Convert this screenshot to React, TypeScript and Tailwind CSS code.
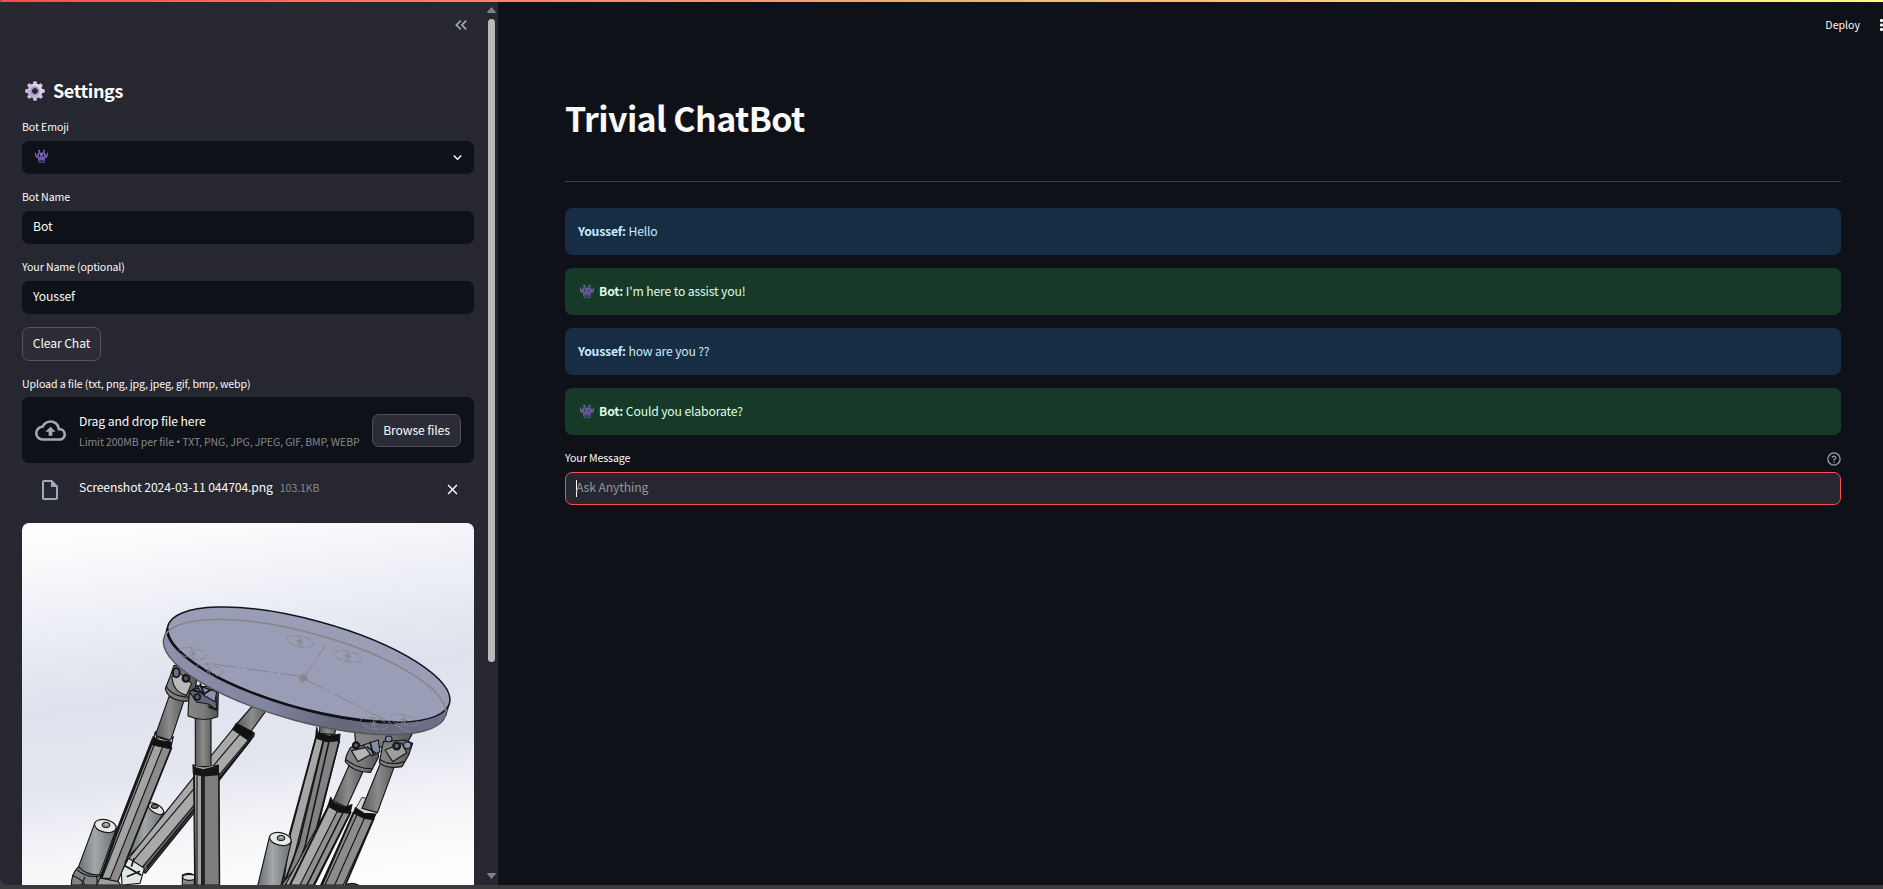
import React from "react";
import {
  MdKeyboardDoubleArrowLeft,
  MdOutlineCloudUpload,
  MdOutlineInsertDriveFile,
  MdClose,
  MdExpandMore,
} from "react-icons/md";

const monsterRows = [
  "...##...##...",
  "....#...#....",
  "#..#######..#",
  "#.##.###.##.#",
  "####.###.####",
  ".###########.",
  "...#######...",
  "...#######...",
  "...#.....#...",
  "....##.##....",
];

function Monster({ className }: { className: string }) {
  return (
    <svg viewBox="0 0 13 10" className={className} preserveAspectRatio="none">
      <defs>
        <linearGradient id="monster" x1="0" y1="0" x2="0" y2="10" gradientUnits="userSpaceOnUse">
          <stop offset="0" stopColor="#7573b8" />
          <stop offset="1" stopColor="#7a4fb0" />
        </linearGradient>
      </defs>
      {monsterRows.flatMap((row, y) =>
        row.split("").map((c, x) =>
          c === "#" ? <rect key={`${x}-${y}`} x={x} y={y} width="1.03" height="1.03" fill="url(#monster)" /> : null
        )
      )}
    </svg>
  );
}

function Gear() {
  return (
    <svg viewBox="-10 -10 20 20" className="size-5 shrink-0">
      <defs>
        <linearGradient id="gear" x1="1" y1="0" x2="0" y2="1">
          <stop offset="0" stopColor="#e6dcef" />
          <stop offset="1" stopColor="#b5a3cc" />
        </linearGradient>
      </defs>
      {[0, 45, 90, 135, 180, 225, 270, 315].map((a) => (
        <rect key={a} x="-1.9" y="-9.8" width="3.8" height="5" rx="1.3" fill="#cfc2de" transform={`rotate(${a})`} />
      ))}
      <circle r="5.3" fill="none" stroke="url(#gear)" strokeWidth="4.6" />
      <circle r="3.8" fill="none" stroke="#a795bd" strokeWidth="1.4" />
    </svg>
  );
}

function Field({ label, children }: { label: string; children: React.ReactNode }) {
  return (
    <div className="mb-[13px]">
      <div className="mb-[4px] h-[20px] text-[10.6px] leading-[20px] tracking-[-0.01em]">{label}</div>
      <div className="flex h-[33px] items-center rounded-[7px] bg-[#0e1117] px-[11px] text-[12.2px]">{children}</div>
    </div>
  );
}

const OUT = "#17181a";

function Mark({ x, y }: { x: number; y: number }) {
  return (
    <g transform={`translate(${x} ${y}) rotate(12)`} fill="none" stroke="#85868a" strokeWidth="2.5">
      <ellipse rx="41" ry="16" strokeDasharray="22 8" />
      <path d="M-12 0H12M-6-13L6 13M6-13L-6 13" />
    </g>
  );
}

function Motor({ x, y, dx, dy }: { x: number; y: number; dx: number; dy: number }) {
  return (
    <g stroke={OUT} strokeWidth="3.5">
      <path d={`M${x - 33} ${y - 5}l${dx} ${dy}q28 26 66 16L${x + 33} ${y + 8}z`} fill="url(#motor)" />
      <ellipse cx={x} cy={y} rx="33" ry="19" transform={`rotate(12 ${x} ${y})`} fill="#e6ebea" />
      <ellipse cx={x + 2} cy={y - 3} rx="12" ry="8" fill="#8d8c88" strokeWidth="3" />
      <ellipse cx={x + 3} cy={y - 5} rx="5" ry="3" fill="#c9b9a9" stroke="none" />
    </g>
  );
}

function Platform() {
  return (
    <svg
      viewBox="66 39 1356 1086"
      preserveAspectRatio="none"
      className="block h-[362px] w-[452px] shrink-0 rounded-t-[7px]"
    >
      <defs>
        <linearGradient id="sky" x1="0.38" y1="0" x2="0.55" y2="1">
          <stop offset="0" stopColor="#fcfdfd" />
          <stop offset="0.2" stopColor="#eef0f6" />
          <stop offset="0.45" stopColor="#dfe2ed" />
          <stop offset="0.66" stopColor="#e4e6ef" />
          <stop offset="0.86" stopColor="#f6f6f9" />
          <stop offset="1" stopColor="#fdfdfd" />
        </linearGradient>
        <linearGradient id="rim">
          <stop offset="0" stopColor="#8d91ad" />
          <stop offset="0.4" stopColor="#81859f" />
          <stop offset="0.65" stopColor="#656879" />
          <stop offset="1" stopColor="#6e7187" />
        </linearGradient>
        <linearGradient id="rod">
          <stop offset="0" stopColor="#5c5c5c" />
          <stop offset="0.5" stopColor="#8b8b8b" />
          <stop offset="1" stopColor="#5f5f5f" />
        </linearGradient>
        <linearGradient id="cup">
          <stop offset="0" stopColor="#858585" />
          <stop offset="0.5" stopColor="#7b7b7b" />
          <stop offset="1" stopColor="#555" />
        </linearGradient>
        <linearGradient id="motor">
          <stop offset="0.1" stopColor="#747a7b" />
          <stop offset="0.45" stopColor="#a2a8a9" />
          <stop offset="1" stopColor="#6a6f70" />
        </linearGradient>
      </defs>
      <rect x="66" y="39" width="1356" height="1086" fill="url(#sky)" />

      {/* rear diagonal leg with its motor */}
      <g stroke={OUT} strokeWidth="3.5" strokeLinejoin="round">
        <path d="M447 880L492 908L440 985L385 1040L400 960z" fill="url(#motor)" />
        <ellipse cx="468" cy="896" rx="26" ry="13" transform="rotate(32 468 896)" fill="#dfe3e3" />
        <ellipse cx="464" cy="889" rx="10" ry="6" fill="#77736f" />
        <path d="M760 585L800 600L750 668L710 642z" fill="url(#rod)" />
        <path d="M700 655L762 678L657 812L583 908L436 1090L384 1048L580 803z" fill="#a9a9a9" />
        <path d="M745 690L764 672L657 808L583 906L432 1088L424 1075z" fill="#666" />
        <path d="M722 670L400 1052" fill="none" />
        <path d="M752 690L440 1072" fill="none" strokeWidth="5" />
        <path d="M709 640L762 668L744 690L698 658z" fill="#111" />
        <path d="M386 1045L433 1075L420 1120L366 1125L364 1086z" fill="#dfe7e6" />
        <path d="M372 1066L424 1096M402 1045L394 1070M380 1100L420 1084" fill="none" strokeWidth="5" />
      </g>

      {/* front left leg */}
      <Motor x={316} y={948} dx={-51} dy={137} />
      <g stroke={OUT} strokeWidth="3.5" strokeLinejoin="round">
        <path d="M238 1072Q262 1098 302 1094L304 1125H214Q214 1094 232 1074z" fill="#7f8585" />
        <path d="M216 1096Q250 1110 254 1125M232 1080Q260 1105 300 1098M255 1100L245 1125M290 1100L292 1125" fill="none" />
        <path d="M507 560L552 572L512 692L466 676z" fill="url(#rod)" />
        <path d="M457 700L514 714L380 1050L352 1118L304 1104L352 968z" fill="#8c8c8c" />
        <path d="M463 704L488 710L330 1106L306 1104z" fill="#a3a3a3" />
        <path d="M459 685L350 965L302 1102" fill="none" strokeWidth="7" />
        <path d="M515 712L375 1060" fill="none" strokeWidth="5" />
        <path d="M466 665L470 682L508 692L520 680L512 715L457 703z" fill="#dedede" />
        <path d="M459 680L480 692L514 696L512 716L457 704z" fill="#111" />
        <path d="M300 1104L355 1115L362 1125H290z" fill="#9aa0a0" />
      </g>

      {/* front vertical leg */}
      <g stroke={OUT} strokeWidth="3.5" strokeLinejoin="round">
        <path d="M547 1095Q568 1085 583 1096V1125H547z" fill="#838888" />
        <ellipse cx="568" cy="1102" rx="20" ry="9" fill="#dce0df" />
        <rect x="586" y="620" width="47" height="156" fill="url(#rod)" />
        <path d="M581 790H657L659 1125H584z" fill="#7d7d7d" />
        <path d="M583 792L606 796V1125H586z" fill="#a4a4a4" />
        <path d="M606 795V1125M612 796V1125" fill="none" strokeWidth="5" />
        <path d="M591 795V1125M656 790L658 1125" fill="none" />
        <path d="M579 764L590 770H632L655 765V794L610 798L580 790z" fill="#151515" />
        <path d="M590 768Q612 776 634 768L650 767L610 778L582 770z" fill="#b8b8b8" strokeWidth="1" />
      </g>

      {/* centre leg */}
      <g stroke={OUT} strokeWidth="3.5" strokeLinejoin="round">
        <path d="M960 648H1008L1004 674L958 670z" fill="url(#rod)" />
        <path d="M948 680L1018 692L955 945L890 1125H846L872 970z" fill="#828282" />
        <path d="M948 684L970 690L880 1050L850 1125L872 970z" fill="#a6a6a6" />
        <path d="M987 694L915 1010L872 1125M971 692L897 1000L850 1125" fill="none" strokeWidth="5" />
        <path d="M1018 692L950 955M948 682L868 975" fill="none" strokeWidth="5" />
        <path d="M950 652L954 668L988 678L1020 672L1018 692L980 695L947 684z" fill="#121212" />
      </g>
      <Motor x={841} y={987} dx={-36} dy={150} />

      {/* pair of right legs */}
      <g stroke={OUT} strokeWidth="3.5" strokeLinejoin="round">
        <path d="M1050 760L1090 782L1040 892L1000 872z" fill="url(#rod)" />
        <path d="M986 884L1053 907L944 1125H844L905 1050z" fill="#909090" />
        <path d="M986 888L1014 900L900 1125H856z" fill="#a8a8a8" />
        <path d="M1030 906L921 1125M1052 906L941 1125" fill="none" strokeWidth="5" />
        <path d="M987 886L870 1125" fill="none" strokeWidth="6" />
        <path d="M992 862L1000 877L1034 892L1056 884L1050 910L1015 906L984 888z" fill="#121212" />
        <path d="M1086 862L1062 905L1120 928L1138 892L1110 868z" fill="#d5d5d8" strokeWidth="2.5" />
        <path d="M1142 758L1182 772L1132 908L1086 895z" fill="url(#rod)" />
        <path d="M1062 905L1120 927L1030 1125H962z" fill="#8c8c8c" />
        <path d="M1096 918L1004 1125M1072 912L975 1125" fill="none" />
        <path d="M1062 905L966 1125M1121 926L1036 1125" fill="none" strokeWidth="6" />
        <path d="M1066 893L1092 910L1126 912L1120 930L1090 924L1061 909z" fill="#121212" />
        <path d="M1036 1125Q1055 1115 1075 1125z" fill="#7f8585" />
      </g>

      {/* universal joints */}
      <g stroke={OUT} strokeWidth="3.5" strokeLinejoin="round">
        <path d="M522 466L512 495L496 536Q504 572 560 574L582 556L590 512L560 470z" fill="url(#cup)" />
        <path d="M516 500Q518 545 560 556L575 520L540 490z" fill="#b9b9b9" />
        <path d="M498 528Q515 560 572 562" fill="none" />
        <circle cx="558" cy="505" r="10" fill="#4c536c" strokeWidth="7" />
        <ellipse cx="529" cy="488" rx="10" ry="14" fill="#6f7588" strokeWidth="6" />
        <path d="M566 572Q566 540 590 530L640 530L655 545L653 620Q610 638 564 618z" fill="url(#cup)" />
        <path d="M568 545Q600 520 648 560L650 600L625 582L590 576z" fill="#62677a" />
        <path d="M590 526L650 545L645 575L610 555z" fill="#8b92ae" />
        <circle cx="592" cy="561" r="9" fill="#525a78" strokeWidth="5" />
        <path d="M600 520L612 552L640 534M576 540L612 550M625 590L652 600" fill="none" strokeWidth="6" />
        <path d="M1064 665H1240L1220 702L1180 735L1140 710L1068 715z" fill="url(#cup)" />
        <path d="M1052 712Q1035 740 1036 755Q1060 788 1112 787L1136 740L1130 700z" fill="url(#cup)" />
        <path d="M1054 722L1074 755L1120 728L1100 712z" fill="#b4b4b4" />
        <path d="M1036 748Q1075 778 1115 776" fill="none" />
        <path d="M1150 695L1138 758Q1160 778 1206 770L1226 735L1238 700L1215 690z" fill="url(#cup)" />
        <path d="M1155 720L1178 755L1220 728L1205 700z" fill="#9e9e9e" />
        <path d="M1138 748Q1170 770 1212 755" fill="none" />
        <path d="M1090 705L1135 690L1140 725L1115 738z" fill="#858ca6" />
        <path d="M1100 710L1128 730M1110 695L1120 735" fill="none" strokeWidth="5" />
        <circle cx="1190" cy="708" r="10" fill="#59617f" strokeWidth="7" />
        <circle cx="1068" cy="706" r="9" fill="#59617f" strokeWidth="7" />
        <ellipse cx="1166" cy="687" rx="10" ry="9" fill="#7f87a5" />
        <ellipse cx="1222" cy="706" rx="11" ry="10" fill="#8e96b8" />
      </g>

      {/* plate */}
      <g transform="translate(914 501) rotate(15.35)">
        <ellipse rx="438" ry="133" fill="url(#rim)" stroke="#55565c" strokeWidth="4" />
      </g>
      <path d="M1348 582L1336 619L492 383L504 346z" fill="url(#rim)" />
      <path d="M1348 582L1337 619M492 383L504 346" stroke="#3c3d44" strokeWidth="3" />
      <g transform="translate(926 464) rotate(15.35)" fill="#999db5">
        <ellipse rx="438" ry="133" stroke="#14151a" strokeWidth="4.5" />
        <path d="M-437 8A438 133 0 0 0 300 97" fill="none" stroke="#111217" strokeWidth="8" />
      </g>
      <g transform="translate(914 501) rotate(15.35)">
        <path d="M-436 -12A438 133 0 0 1 436 -12" fill="none" stroke="#85868a" strokeWidth="4.5" />
      </g>
      <g fill="none" stroke="#85868a" strokeWidth="3">
        <path d="M910 503L978 406" strokeDasharray="50 8 8 8" />
        <path d="M910 500L610 458" strokeDasharray="70 10 12 10" />
        <path d="M910 505L1230 668" strokeDasharray="70 10 12 10" />
        <path d="M895 504H925M910 489V519M900 494L920 514M920 494L900 514" strokeWidth="4" />
      </g>
      <Mark x={900} y={394} />
      <Mark x={1043} y={439} />
      <Mark x={578} y={430} />
      <Mark x={626} y={480} />
      <Mark x={1122} y={640} />
      <Mark x={1212} y={630} />
    </svg>
  );
}

function Sidebar() {
  return (
    <aside className="flex h-full w-[498px] shrink-0 overflow-hidden rounded-bl-[8px] bg-[#262730]">
      <div className="flex w-[474px] flex-col pl-[22px]">
        <div className="flex h-[46px] shrink-0 justify-end pt-[13px] pr-[3px]">
          <MdKeyboardDoubleArrowLeft className="size-[20px] text-[#a3a8b4]" />
        </div>
        <div className="mt-[30px] mb-[13px] flex h-[26px] shrink-0 items-center gap-[8px] pl-[3px]">
          <Gear />
          <h2 className="pb-[2px] text-[18px] leading-[26px] font-bold tracking-[-0.02em] text-white">Settings</h2>
        </div>
        <Field label="Bot Emoji">
          <span className="flex w-full items-center justify-between">
            <Monster className="mb-[2px] ml-[2px] h-[13px] w-[13px]" />
            <MdExpandMore className="mr-[-3px] mb-px size-[17px]" />
          </span>
        </Field>
        <Field label="Bot Name">
          <span className="pb-[3px] tracking-[-0.01em]">Bot</span>
        </Field>
        <Field label="Your Name (optional)">
          <span className="pb-[3px] tracking-[-0.01em]">Youssef</span>
        </Field>
        <button className="h-[34px] w-[79px] shrink-0 rounded-[7px] border border-[#53545c] bg-[#2b2c36] pb-[2px] text-[12.2px] tracking-[-0.01em]">
          Clear Chat
        </button>
        <div className="mt-[13px] mb-[3px] h-[20px] text-[10.6px] leading-[20px] tracking-[-0.01em]">
          Upload a file (txt, png, jpg, jpeg, gif, bmp, webp)
        </div>
        <div className="flex h-[66px] shrink-0 items-center rounded-[7px] bg-[#0e1117] pr-[13px] pl-[13px]">
          <MdOutlineCloudUpload className="mr-[13px] size-[31px] shrink-0 text-[#a3a8b8]" />
          <div className="flex-1 pt-[3px] whitespace-nowrap">
            <div className="text-[12.2px] leading-[20px] tracking-[-0.01em]">Drag and drop file here</div>
            <div className="text-[10.6px] leading-[21px] tracking-[-0.012em] text-[#86888c]">
              Limit 200MB per file <span className="font-['Noto_Sans']">•</span> TXT, PNG, JPG, JPEG, GIF, BMP, WEBP
            </div>
          </div>
          <button className="h-[33px] w-[89px] shrink-0 rounded-[7px] border border-[#50515a] bg-[#2b2c36] text-[12.2px] tracking-[-0.01em]">
            Browse files
          </button>
        </div>
        <div className="flex h-[60px] shrink-0 items-center pr-[13px] pb-[6px] pl-[16px]">
          <MdOutlineInsertDriveFile className="mr-[17px] size-[24px] shrink-0 text-[#a3a8b8]" />
          <span className="pb-[5px] text-[12.2px] tracking-[-0.01em] whitespace-nowrap">
            Screenshot 2024-03-11 044704.png
          </span>
          <span className="ml-[7px] flex-1 pb-[4px] text-[10.6px] tracking-[-0.01em] text-[#86888c]">103.1KB</span>
          <MdClose className="mb-[2px] size-[17px]" />
        </div>
        <Platform />
      </div>
      <div className="flex flex-1 flex-col items-end pr-[2px]">
        <svg viewBox="0 0 9 6" className="mt-[5px] h-[6px] w-[9px]">
          <path d="M4.5 0L9 5.2Q9 6 8 6H1Q0 6 0 5.2z" fill="#808187" />
        </svg>
        <div className="mt-[6px] mr-[1px] h-[643px] w-[7px] rounded-full bg-[#bababa]" />
        <svg viewBox="0 0 9 6" className="mt-[211px] h-[6px] w-[9px]">
          <path d="M4.5 6L0 .8Q0 0 1 0H8Q9 0 9 .8z" fill="#808187" />
        </svg>
      </div>
    </aside>
  );
}

function UserMessage({ text }: { text: string }) {
  return (
    <div className="flex h-[47px] items-center rounded-[7px] bg-[#172d43] px-[13px] text-[12.2px] tracking-[-0.015em] text-[#c7ebff]">
      <p>
        <b>Youssef:</b> {text}
      </p>
    </div>
  );
}

function BotMessage({ text }: { text: string }) {
  return (
    <div className="flex h-[47px] items-center rounded-[7px] bg-[#173928] px-[13px] text-[12.2px] tracking-[-0.012em] text-[#dffde9]">
      <Monster className="mr-[5px] ml-[2px] h-[13px] w-[14px]" />
      <p>
        <b>Bot:</b> {text}
      </p>
    </div>
  );
}

export default function App() {
  return (
    <div className="flex h-[889px] w-full flex-col overflow-hidden bg-[#3b3b3d] font-['Noto_Sans_CJK_SC','Noto_Sans',sans-serif] text-[#fafafa]">
      <div className="h-[2px] shrink-0 rounded-tl bg-linear-to-r from-[#ff4b4b] to-[#fffd80]" />
      <div className="flex h-[883px]">
        <Sidebar />
        <main className="flex min-w-0 flex-1 flex-col bg-[#0e1117] pl-[67px]">
          <header className="flex h-[46px] shrink-0 items-center justify-end">
            <span className="mr-[20px] pb-[1px] text-[10.6px]">Deploy</span>
            <svg viewBox="0 0 3 12" className="mb-[1px] h-[12px] w-[3px]" fill="#fafafa">
              <rect y="0" width="3" height="3" rx="1" />
              <rect y="4.5" width="3" height="3" rx="1" />
              <rect y="9" width="3" height="3" rx="1" />
            </svg>
          </header>
          <div className="flex w-[1276px] flex-col">
            <h1 className="mt-[46px] h-[48px] text-[34px] leading-[48px] font-bold tracking-[-0.018em]">Trivial ChatBot</h1>
            <hr className="mt-[39px] border-[#3b3d42]" />
            <div className="mt-[26px] flex flex-col gap-[13px]">
              <UserMessage text="Hello" />
              <BotMessage text="I'm here to assist you!" />
              <UserMessage text="how are you ??" />
              <BotMessage text="Could you elaborate?" />
            </div>
            <div className="mt-[13px] mb-[4px] flex h-[20px] items-center justify-between text-[10.6px] tracking-[-0.01em]">
              <span>Your Message</span>
              <svg viewBox="0 0 24 24" className="mt-[2px] size-[14px]" fill="none" stroke="#9b9c9f" strokeWidth="2.3" strokeLinecap="round">
                <circle cx="12" cy="12" r="10.5" />
                <path d="M9.1 9a3 3 0 0 1 5.8 1c0 2-2.9 2.6-2.9 4M12 17.4v.1" />
              </svg>
            </div>
            <div className="flex h-[33px] items-center rounded-[7px] border border-[#ff4b4b] bg-[#262730] pl-[10px] text-[12.2px] tracking-[-0.01em] text-[#95969a]">
              <span className="h-[17px] w-px bg-white" />
              <span className="-ml-px pb-[2px]">Ask Anything</span>
            </div>
          </div>
        </main>
      </div>
    </div>
  );
}
